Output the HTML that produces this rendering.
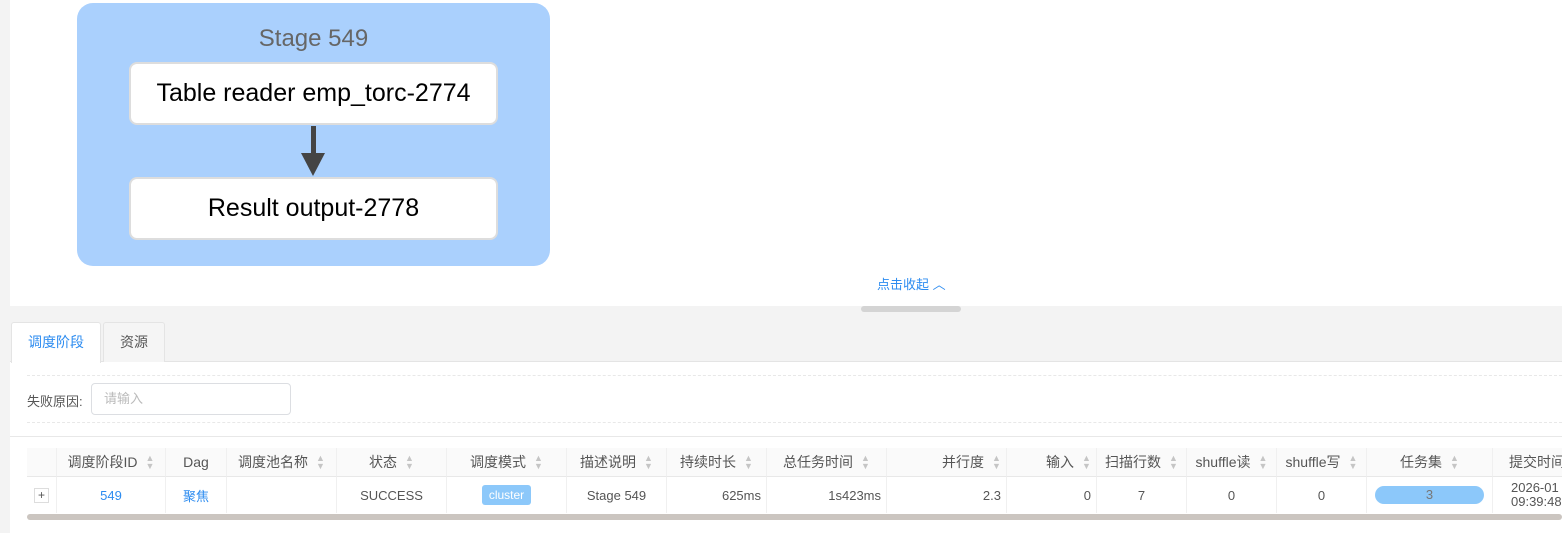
<!DOCTYPE html>
<html><head><meta charset="utf-8"><style>
*{box-sizing:border-box;margin:0;padding:0}
body{width:1562px;height:533px;background:#f3f3f3;font-family:"Liberation Sans","Noto Sans CJK SC",sans-serif;position:relative;overflow:hidden;font-size:13px;color:#555}
.abs{position:absolute}
.top{left:10px;top:0;width:1552px;height:306px;background:#fff}
.stage{left:77px;top:3px;width:473px;height:263px;background:#aad0fd;border-radius:16px}
.stitle{left:0;width:473px;top:22px;text-align:center;font-size:24px;color:#666}
.node{left:52px;width:369px;height:63px;background:#fff;border:2px solid #ddd;border-radius:8px;font-size:25px;color:#000;text-align:center;line-height:59px}
.bottom{left:10px;top:361px;width:1552px;height:172px;background:#fff;border-top:1px solid #e4e4e4}
.tab{top:322px;height:40px;border:1px solid #e4e4e4;border-bottom:none;background:#f5f5f5;border-radius:3px 3px 0 0;font-size:14px;line-height:38px;text-align:center;color:#555}
.dash{left:27px;width:1535px;border-top:1px dashed #e8e8e8}
.h,.c{position:absolute;display:flex;align-items:center;justify-content:center;border-right:1px solid #f0f0f0}
.h{top:448px;height:29px;background:#fafafa;font-size:14px;color:#555;border-bottom:1px solid #e8e8e8}
.c{top:477px;height:36px;font-size:13px;color:#555}
.s{display:inline-block;width:9px;margin-left:8px;color:#c5c5c5;font-size:9px;line-height:8px;vertical-align:middle}
.r{justify-content:flex-end;padding-right:5px}
.blue{color:#2d8cf0}
</style></head><body>
<div class="abs top"></div>
<div class="abs stage">
 <div class="abs stitle">Stage 549</div>
 <div class="abs node" style="top:59px">Table reader emp_torc-2774</div>
 <div class="abs" style="left:234px;top:123px;width:5px;height:35px;background:#444"></div>
 <div class="abs" style="left:224px;top:150px;width:0;height:0;border-left:12px solid transparent;border-right:12px solid transparent;border-top:23px solid #444"></div>
 <div class="abs node" style="top:174px">Result output-2778</div>
</div>
<div class="abs blue" style="left:877px;top:274px;font-size:13px">点击收起 ︿</div>
<div class="abs" style="left:861px;top:306px;width:100px;height:6px;background:#d4d4d4;border-radius:3px"></div>
<div class="abs bottom"></div>
<div class="abs tab" style="left:11px;width:90px;background:#fff;height:41px;color:#2d8cf0">调度阶段</div>
<div class="abs tab" style="left:103px;width:62px">资源</div>
<div class="abs dash" style="top:375px"></div>
<div class="abs" style="left:27px;top:391px;font-size:13px;color:#555">失败原因:</div>
<div class="abs" style="left:91px;top:383px;width:200px;height:32px;border:1px solid #dcdee2;border-radius:4px;padding-left:12px;line-height:30px;color:#bbb">请输入</div>
<div class="abs dash" style="top:422px"></div>
<div class="abs" style="left:10px;top:436px;width:1552px;border-top:1px solid #e8e8e8"></div>

<div class="h" style="left:27px;width:30px"></div>
<div class="h" style="left:57px;width:109px">调度阶段ID<span class="s">▲<br>▼</span></div>
<div class="h" style="left:166px;width:61px">Dag</div>
<div class="h" style="left:227px;width:110px">调度池名称<span class="s">▲<br>▼</span></div>
<div class="h" style="left:337px;width:110px">状态<span class="s">▲<br>▼</span></div>
<div class="h" style="left:447px;width:120px">调度模式<span class="s">▲<br>▼</span></div>
<div class="h" style="left:567px;width:100px">描述说明<span class="s">▲<br>▼</span></div>
<div class="h" style="left:667px;width:100px">持续时长<span class="s">▲<br>▼</span></div>
<div class="h" style="left:767px;width:120px">总任务时间<span class="s">▲<br>▼</span></div>
<div class="h r" style="left:887px;width:120px">并行度<span class="s">▲<br>▼</span></div>
<div class="h r" style="left:1007px;width:90px">输入<span class="s">▲<br>▼</span></div>
<div class="h" style="left:1097px;width:90px">扫描行数<span class="s">▲<br>▼</span></div>
<div class="h" style="left:1187px;width:90px">shuffle读<span class="s">▲<br>▼</span></div>
<div class="h" style="left:1277px;width:90px">shuffle写<span class="s">▲<br>▼</span></div>
<div class="h" style="left:1367px;width:126px">任务集<span class="s">▲<br>▼</span></div>
<div class="h" style="left:1493px;width:80px;justify-content:flex-start;padding-left:16px">提交时间</div>

<div class="c" style="left:27px;width:30px"><span style="width:15px;height:15px;border:1px solid #ddd;font-size:12px;line-height:13px;text-align:center;display:inline-block">+</span></div>
<div class="c blue" style="left:57px;width:109px">549</div>
<div class="c blue" style="left:166px;width:61px">聚焦</div>
<div class="c" style="left:227px;width:110px"></div>
<div class="c" style="left:337px;width:110px">SUCCESS</div>
<div class="c" style="left:447px;width:120px"><span style="background:#8cc8fa;color:#fff;border-radius:3px;padding:3px 7px;font-size:12px">cluster</span></div>
<div class="c" style="left:567px;width:100px">Stage 549</div>
<div class="c r" style="left:667px;width:100px">625ms</div>
<div class="c r" style="left:767px;width:120px">1s423ms</div>
<div class="c r" style="left:887px;width:120px">2.3</div>
<div class="c r" style="left:1007px;width:90px">0</div>
<div class="c" style="left:1097px;width:90px">7</div>
<div class="c" style="left:1187px;width:90px">0</div>
<div class="c" style="left:1277px;width:90px">0</div>
<div class="c" style="left:1367px;width:126px"><span style="width:109px;height:18px;background:#8cc8fa;border-radius:9px;text-align:center;line-height:18px;color:#777;display:inline-block">3</span></div>
<div class="c" style="left:1493px;width:80px;flex-direction:column;line-height:14px;justify-content:center;padding-left:18px;align-items:flex-start">2026-01<br>09:39:48.</div>
<div class="abs" style="left:27px;top:514px;width:1535px;height:6px;background:#cbc5c0;border-radius:3px"></div>
</body></html>
